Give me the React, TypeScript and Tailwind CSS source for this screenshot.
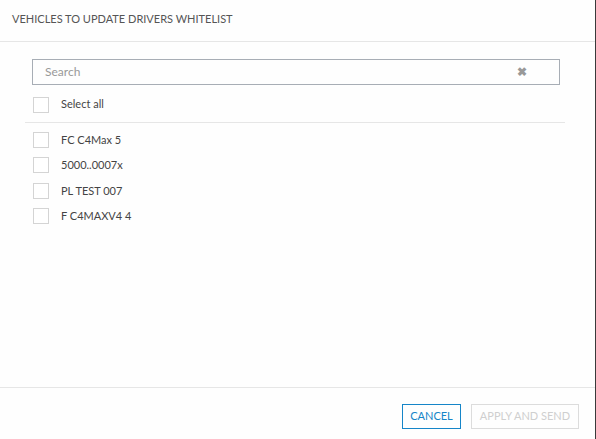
import React from 'react';

const vehicles = ['FC C4Max 5', '5000..0007x', 'PL TEST 007', 'F C4MAXV4 4'];

function Box() {
  return <span className="w-[16px] h-[16px] border border-[#d4d4d4] bg-white shrink-0" />;
}

export default function App() {
  return (
    <div className="w-[596px] h-[439px] flex bg-white font-['Lato','Liberation_Sans',sans-serif] overflow-hidden">
      <div className="w-[595px] h-full flex flex-col bg-[#fefefe]">
        <div className="h-[42px] border-b border-[#e6e6e6] pl-[12px] pt-[11px] text-[11px] text-[#555]">
          VEHICLES TO UPDATE DRIVERS WHITELIST
        </div>
        <div className="flex-1 flex flex-col pt-[17px] pl-[25px] pr-[30px]">
          <div className="ml-[7px] mr-[5px] h-[26px] border border-[#a7adb5] flex items-center pl-[12px] pr-[32px]">
            <span className="flex-1 text-[12px] text-[#999]">Search</span>
            <span className="text-[12px] leading-none text-[#999] font-bold">✖</span>
          </div>
          <div className="flex items-center gap-[12px] pl-[8px] mt-[11px] h-[17px]">
            <Box />
            <span className="text-[11px] text-[#444]">Select all</span>
          </div>
          <div className="mt-[9px] border-t border-[#e6e6e6]" />
          <div className="flex flex-col pl-[8px] pt-[9px] gap-[9.4px]">
            {vehicles.map((v) => (
              <div key={v} className="flex items-center gap-[12px] h-[16px]">
                <Box />
                <span className="text-[11px] text-[#444]">{v}</span>
              </div>
            ))}
          </div>
        </div>
        <div className="h-[52px] border-t border-[#e6e6e6] flex justify-end items-start pt-[16px] pr-[16px] gap-[10px]">
          <button className="h-[25px] w-[59px] border border-[#1585c8] text-[11px] text-[#1585c8]">CANCEL</button>
          <button className="h-[25px] w-[108px] border border-[#dcdcdc] text-[11px] text-[#cfcfcf]">APPLY AND SEND</button>
        </div>
      </div>
      <div className="w-[1px] h-full bg-[#3a3a3a]" />
    </div>
  );
}
